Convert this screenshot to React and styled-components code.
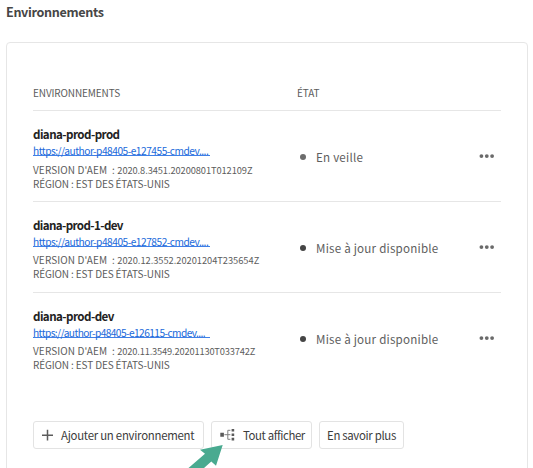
import React from 'react';
import styled, { createGlobalStyle } from 'styled-components';

const GlobalStyle = createGlobalStyle`
  * { box-sizing: border-box; }
  html, body { margin: 0; background: #fff; overflow: hidden; }
  body { font-family: "Noto Sans CJK SC", "Noto Sans", sans-serif; color: #4b4b4b; }
`;

const Page = styled.main`
  position: relative;
  width: 533px;
  height: 468px;
  padding: 0 5px 0 6px;
  overflow: hidden;
`;

const Title = styled.h1`
  margin: 0;
  height: 42px;
  padding-top: 2px;
  font-size: 12.6px;
  line-height: 19px;
  font-weight: 700;
  letter-spacing: -0.35px;
  color: #464646;
  white-space: nowrap;
`;

const Card = styled.section`
  height: 450px;
  padding: 0 26px;
  border: 1px solid #e6e6e6;
  border-radius: 4px;
`;

const HeaderRow = styled.div`
  display: grid;
  grid-template-columns: 264px 1fr;
  height: 68px;
  padding-top: 42px;
  border-bottom: 1px solid #e6e6e6;
  font-size: 10px;
  line-height: 16px;
  letter-spacing: -0.12px;
  color: #5c5c5c;
`;

const EnvRow = styled.div`
  display: grid;
  grid-template-columns: 264px 1fr 24px;
  height: 91px;
  border-bottom: 1px solid ${(p) => (p.$last ? 'transparent' : '#e6e6e6')};
`;

const Details = styled.div`
  padding-top: 14px;
  white-space: nowrap;
`;

const Name = styled.div`
  font-size: 11.6px;
  line-height: 18px;
  font-weight: 700;
  letter-spacing: ${(p) => p.$spacing}px;
  color: #222;
`;

const Link = styled.a`
  display: block;
  width: 177px;
  height: 13px;
  margin-bottom: ${(p) => p.$gap}px;
  border-bottom: 1px solid #3f7fe6;
  font-size: 10.2px;
  line-height: 16px;
  letter-spacing: ${(p) => p.$spacing}px;
  color: #2069da;
  text-decoration: none;
`;

const Meta = styled.div`
  height: 14px;
  font-size: 10px;
  line-height: 14px;
  letter-spacing: ${(p) => p.$spacing}px;
  white-space: pre;
  color: #5c5c5c;
`;

const Version = styled.span`
  font-size: 9.3px;
  letter-spacing: ${(p) => p.$spacing}px;
`;

const Status = styled.div`
  display: flex;
  align-items: center;
  height: 18px;
  margin-top: 37px;
  padding-left: 3px;
  gap: 10px;
  font-size: 11.6px;
  letter-spacing: 0.22px;
  color: #5e5e5e;
  white-space: nowrap;
`;

const Label = styled.span`
  line-height: 18px;
`;

const Dot = styled.span`
  width: 6px;
  height: 6px;
  border-radius: 50%;
  background: ${(p) => p.$color};
`;

const MoreButton = styled.button`
  display: flex;
  align-items: center;
  width: 16px;
  height: 12px;
  margin: 39px 0 0 1px;
  padding: 0;
  border: 0;
  background: none;
`;

const Actions = styled.div`
  display: flex;
  gap: 7px;
  margin-top: 37px;
`;

const Button = styled.button`
  display: flex;
  align-items: center;
  width: ${(p) => p.$width}px;
  height: 28px;
  padding: 0 0 0 7px;
  gap: ${(p) => p.$gap || 0}px;
  border: 1px solid #e3e3e3;
  border-radius: 3px;
  background: #fff;
  font-family: inherit;
  font-size: 11.4px;
  letter-spacing: ${(p) => p.$spacing}px;
  color: #3c3c3c;
  white-space: nowrap;
`;

const Pointer = styled.svg`
  position: absolute;
  left: 184px;
  top: 442px;
`;

const environments = [
  {
    name: 'diana-prod-prod', nameSpacing: -0.56,
    url: 'https://author-p48405-e127455-cmdev....', urlSpacing: -0.5, linkGap: 7,
    version: '2020.8.3451.20200801T012109Z', versionSpacing: -0.09,
    status: 'En veille', dot: '#6c6c6c',
  },
  {
    name: 'diana-prod-1-dev', nameSpacing: -0.62,
    url: 'https://author-p48405-e127852-cmdev....', urlSpacing: -0.5, linkGap: 6,
    version: '2020.12.3552.20201204T235654Z', versionSpacing: -0.03,
    status: 'Mise à jour disponible', dot: '#454545',
  },
  {
    name: 'diana-prod-dev', nameSpacing: -0.56,
    url: 'https://author-p48405-e126115-cmdev....', urlSpacing: -0.58, linkGap: 6,
    version: '2020.11.3549.20201130T033742Z', versionSpacing: -0.17,
    status: 'Mise à jour disponible', dot: '#454545',
  },
];

function MoreIcon() {
  return (
    <svg width="16" height="6" viewBox="0 0 16 6" fill="#6a6a6a">
      <circle cx="3.4" cy="3.1" r="1.9" />
      <circle cx="8.8" cy="3.1" r="1.9" />
      <circle cx="14.1" cy="3.1" r="1.9" />
    </svg>
  );
}

function PlusIcon() {
  return (
    <svg width="12" height="12" viewBox="0 0 12 12" stroke="#5c5c5c" strokeWidth="1.5">
      <path d="M6.5 .8v10.8M1 6.2h11" />
    </svg>
  );
}

function TreeIcon() {
  return (
    <svg width="16" height="12" viewBox="0 0 16 12">
      <path d="M1.3 3.8h3.6v4H1.3zM12.6 0h2.6v2.6h-2.6zM12.6 4.4h2.6V7h-2.6zM12.6 8.8h2.6v2.6h-2.6z" fill="#5a5a5a" />
      <path d="M5.4 5.7h6M11.4 1.3h-2.6v9h2.6" fill="none" stroke="#808080" />
    </svg>
  );
}

export default function App() {
  return (
    <>
      <GlobalStyle />
      <Page>
        <Title>Environnements</Title>
        <Card>
          <HeaderRow>
            <span>ENVIRONNEMENTS</span>
            <span>ÉTAT</span>
          </HeaderRow>
          {environments.map((env, i) => (
            <EnvRow key={env.name} $last={i === environments.length - 1}>
              <Details>
                <Name $spacing={env.nameSpacing}>{env.name}</Name>
                <Link $spacing={env.urlSpacing} $gap={env.linkGap}>{env.url}</Link>
                <Meta $spacing={0.12}>
                  {"VERSION D'AEM  : "}
                  <Version $spacing={env.versionSpacing}>{env.version}</Version>
                </Meta>
                <Meta $spacing={-0.13}>RÉGION : EST DES ÉTATS-UNIS</Meta>
              </Details>
              <Status>
                <Dot $color={env.dot} />
                <Label>{env.status}</Label>
              </Status>
              <MoreButton aria-label="Options"><MoreIcon /></MoreButton>
            </EnvRow>
          ))}
          <Actions>
            <Button $width={171} $gap={8} $spacing={-0.26}><PlusIcon /><Label>Ajouter un environnement</Label></Button>
            <Button $width={101} $gap={8} $spacing={-0.4}><TreeIcon /><Label>Tout afficher</Label></Button>
            <Button $width={85} $spacing={-0.32}><Label>En savoir plus</Label></Button>
          </Actions>
        </Card>
        <Pointer width="40" height="26" viewBox="0 0 40 26">
          <path d="M38.7 3 32 23.7 27.3 19.5 20 26H4.5L21 11.8 16 7.7Z" fill="#49aa90" />
        </Pointer>
      </Page>
    </>
  );
}
